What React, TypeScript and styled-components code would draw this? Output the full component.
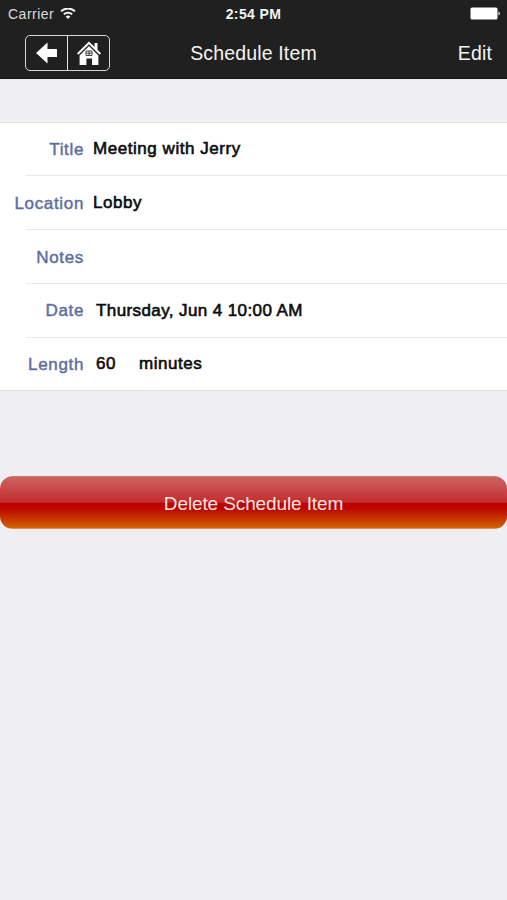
import React from 'react';
import styled, { createGlobalStyle } from 'styled-components';

const Global = createGlobalStyle`
  * { box-sizing: border-box; }
  html, body { margin: 0; padding: 0; background: #efeef3; }
  body { font-family: "Liberation Sans", Arial, sans-serif; overflow: hidden; }
`;

const Screen = styled.div`
  width: 507px;
  height: 900px;
  background: #efeef3;
  display: flex;
  flex-direction: column;
`;

const Header = styled.header`
  height: 79px;
  flex: none;
  background: #202020;
  border-bottom: 1px solid #151515;
  color: #f4f4f4;
`;

const Bar = styled.div<{ $height: number }>`
  display: grid;
  grid-template-columns: 1fr auto 1fr;
  align-items: center;
  height: ${(p) => p.$height}px;
`;

const Carrier = styled.div`
  display: flex;
  align-items: center;
  gap: 6px;
  padding-left: 8px;
  font-size: 14px;
  letter-spacing: 0.5px;
  line-height: 28px;
  color: #dedede;
`;

const Clock = styled.div`
  font-size: 14px;
  font-weight: 700;
  line-height: 28px;
  letter-spacing: 0.4px;
`;

const Battery = styled.svg`
  justify-self: end;
  margin: -2px 6px 0 0;
`;

const NavButtons = styled.div`
  display: flex;
  width: 85px;
  height: 36px;
  margin-left: 25px;
  border: 1.5px solid #d6d6d6;
  border-radius: 5px;
`;

const NavButton = styled.button`
  flex: 1;
  padding: 0;
  border: 0;
  background: none;
  display: flex;
  align-items: center;
  justify-content: center;
  & + & { border-left: 1px solid #e4e4e4; }
`;

const Heading = styled.h1`
  margin: 0;
  font-size: 19.5px;
  font-weight: 400;
  letter-spacing: 0.15px;
  line-height: 24px;
`;

const EditButton = styled.button`
  justify-self: end;
  margin-right: 15px;
  padding: 0;
  border: 0;
  background: none;
  color: #f4f4f4;
  font: 400 19.5px/24px "Liberation Sans", Arial, sans-serif;
  letter-spacing: 0.15px;
`;

const Table = styled.dl`
  margin: 43px 0 0;
  height: 269px;
  flex: none;
  background: #fff;
  border-top: 1px solid #e2e2e5;
  border-bottom: 1px solid #dcdce0;
  display: grid;
  grid-template-rows: 52px 54px 54px 54px 53px;
`;

const Row = styled.div`
  display: flex;
  align-items: flex-start;
  padding-top: 17px;
  background: linear-gradient(#e9e9eb, #e9e9eb) 26px 0 / 100% 1px no-repeat;
  &:first-child { background: none; padding-top: 15px; }
  &:last-child { padding-top: 16px; }
`;

const Label = styled.dt<{ $level?: boolean }>`
  width: 84px;
  padding-top: ${(p) => (p.$level ? 0 : 1)}px;
  text-align: right;
  white-space: nowrap;
  font-size: 17px;
  line-height: 22px;
  letter-spacing: 0.65px;
  color: #5b6f9f;
  -webkit-text-stroke: 0.45px #5b6f9f;
`;

const Value = styled.dd<{ $inset?: number; $spacing?: number }>`
  margin: 0 0 0 ${(p) => p.$inset ?? 9}px;
  display: flex;
  gap: 23px;
  white-space: nowrap;
  font-size: 17px;
  line-height: 22px;
  letter-spacing: ${(p) => p.$spacing ?? 0.55}px;
  color: #0c0c0c;
  -webkit-text-stroke: 0.6px #0c0c0c;
`;

const DeleteButton = styled.button`
  margin: 85px 0 0;
  padding: 2px 0 0;
  width: 507px;
  height: 53px;
  flex: none;
  border: 0;
  border-radius: 13px;
  background: linear-gradient(#cf817c 0, #cd6260 1.5px, #c42d2d 49%, #bd0000 52%, #be0700 62%, #d06000 97%, #dfa581 100%);
  color: #fbe6e4;
  font: 400 19px/24px "Liberation Sans", Arial, sans-serif;
  letter-spacing: -0.12px;
`;

const Wifi = () => (
  <svg width="16" height="13" viewBox="0 0 16 13" fill="none" stroke="#f2f2f2" strokeWidth="2">
    <path d="M1 3.4a10 10 0 0 1 14 0" />
    <path d="M3.8 6.4a6 6 0 0 1 8.4 0" />
    <path d="M8 10.9L5.6 8.6a3.4 3.4 0 0 1 4.8 0z" fill="#f2f2f2" stroke="none" />
  </svg>
);

const BackArrow = () => (
  <svg width="21" height="22" viewBox="0 0 21 22" fill="#fff">
    <path d="M0 11L11.5 0.5V7H21V15H11.5V21.5Z" />
  </svg>
);

const House = () => (
  <svg width="24" height="25" viewBox="0 0 24 25">
    <path d="M17.5 2H20.5V10L17.5 7Z" fill="#fff" />
    <path d="M0.7 13L12 1.8L23.3 13" fill="none" stroke="#fff" strokeWidth="2" />
    <path d="M2.6 14.4L12 5L21.4 14.4V24H15V17.5H9.4V24H2.6Z" fill="#fff" />
    <path d="M9 10H15V14.5H9ZM12 10V14.5M9 12.2H15" fill="none" stroke="#303030" strokeWidth="0.9" />
  </svg>
);

export default function App() {
  return (
    <>
      <Global />
      <Screen>
        <Header>
          <Bar $height={28}>
            <Carrier>Carrier <Wifi /></Carrier>
            <Clock>2:54 PM</Clock>
            <Battery width="31" height="13" viewBox="0 0 31 13" fill="#fff">
              <rect x="0.5" y="0.5" width="27" height="12" rx="1.5" />
              <path d="M28.5 4.5a2.2 2.2 0 0 1 0 4z" />
            </Battery>
          </Bar>
          <Bar $height={50}>
            <NavButtons>
              <NavButton aria-label="Back"><BackArrow /></NavButton>
              <NavButton aria-label="Home"><House /></NavButton>
            </NavButtons>
            <Heading>Schedule Item</Heading>
            <EditButton>Edit</EditButton>
          </Bar>
        </Header>
        <Table>
          <Row><Label>Title</Label><Value>Meeting with Jerry</Value></Row>
          <Row><Label>Location</Label><Value>Lobby</Value></Row>
          <Row><Label>Notes</Label><Value /></Row>
          <Row><Label $level>Date</Label><Value $inset={12} $spacing={0.4}>Thursday, Jun 4 10:00 AM</Value></Row>
          <Row><Label>Length</Label><Value $inset={12}><span>60</span><span>minutes</span></Value></Row>
        </Table>
        <DeleteButton>Delete Schedule Item</DeleteButton>
      </Screen>
    </>
  );
}
